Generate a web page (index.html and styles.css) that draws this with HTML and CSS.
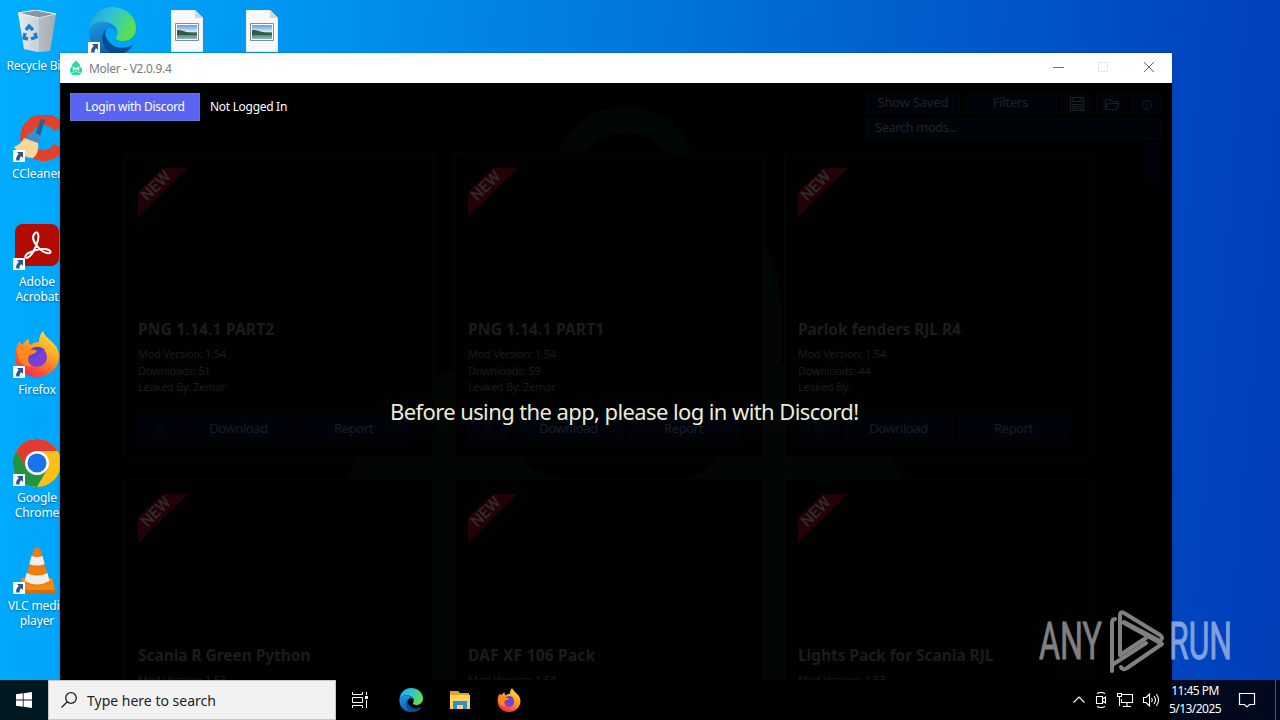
FILE: index.html
```
<!DOCTYPE html>
<html lang="en">
<head>
  <meta charset="UTF-8">
  <title>Moler - V2.0.9.4</title>
  <link rel="stylesheet" href="styles.css">
</head>
<body>
  <!-- shared symbols -->
  <svg class="defs" width="0" height="0">
    <defs>
      <linearGradient id="edgeGreen" x1="0" y1="0" x2="1" y2="0.4">
        <stop offset="0" stop-color="#1b9de2"/>
        <stop offset="0.5" stop-color="#2fc3d4"/>
        <stop offset="1" stop-color="#5be04f"/>
      </linearGradient>
      <linearGradient id="edgeBlue" x1="0" y1="0" x2="0.6" y2="1">
        <stop offset="0" stop-color="#1c9de6"/>
        <stop offset="1" stop-color="#0a54a8"/>
      </linearGradient>
      <linearGradient id="foxBody" x1="0.8" y1="0" x2="0.2" y2="1">
        <stop offset="0" stop-color="#ffe63b"/>
        <stop offset="0.45" stop-color="#ff9a22"/>
        <stop offset="0.75" stop-color="#ff5037"/>
        <stop offset="1" stop-color="#e8265f"/>
      </linearGradient>
      <linearGradient id="bin" x1="0" y1="0" x2="1" y2="0">
        <stop offset="0" stop-color="#e8eef2"/>
        <stop offset="0.6" stop-color="#c3ccd4"/>
        <stop offset="1" stop-color="#9aa7b3"/>
      </linearGradient>
      <linearGradient id="photo" x1="0" y1="0" x2="0" y2="1">
        <stop offset="0" stop-color="#5f9fe4"/>
        <stop offset="0.5" stop-color="#dcecf5"/>
        <stop offset="0.55" stop-color="#3d6c58"/>
        <stop offset="1" stop-color="#8fb8c8"/>
      </linearGradient>
    </defs>
    <symbol id="edge" viewBox="0 0 48 48">
      <path d="M1 22C2 9 12 0 24 0c14 0 24 10 24 21 0 8-6 13-13 13-5 0-8-2-7-4 3-4 2-10-4-13C16 13 6 14 1 22z" fill="url(#edgeGreen)"/>
      <path d="M1 22c5-8 15-9 22-5 3 2 5 5 5 8-1-3-4-5-7-4-6 3-6 12 0 18 6 5 15 5 23 0-4 6-12 9-20 9C10 48-1 36 1 22z" fill="url(#edgeBlue)"/>
      <path d="M18 22c-7 8-4 20 7 25 8 2 16-2 20-9-8 4-17 4-23-2-4-4-6-9-4-14z" fill="#0c4a94"/>
    </symbol>
    <symbol id="firefox" viewBox="0 0 46 46">
      <path d="M29 0c1 4 5 7 8 10 5 4 8 9 8 15 0 12-10 21-22 21S1 37 1 25c0-7 2-11 5-15 0 2 1 3 2 4 2-3 4-5 7-6-1 3 0 5 2 6 3-3 6-3 8-3 0-4 1-8 4-11z" fill="url(#foxBody)"/>
      <circle cx="23" cy="26" r="10" fill="#7a3fd6"/>
      <path d="M16 19c4-4 12-4 15 0-3 0-5 1-6 4-2 3-7 4-11 5-1-4 0-7 2-9z" fill="#5b3fd0"/>
      <path d="M3 18c5-4 9-3 12 0 3 1 6 0 8 2-1 3-5 3-7 4-3 3-2 8 1 11C8 36 3 29 3 18z" fill="#ff8a1c"/>
    </symbol>
    <symbol id="shortcut" viewBox="0 0 12 12">
      <path d="M0 0h12v12H0z" fill="#fff"/>
      <path d="M4 2h6v6L8.300 6.300C7 7.200 6.400 8.400 6.600 10.500H3.200C2.700 7.500 4 5.600 5.800 3.900z" fill="#2a5598"/>
    </symbol>
    <symbol id="image-file" viewBox="0 0 32 42">
      <path d="M0 0h24l8 8v34H0z" fill="#f8f8f8" stroke="#c9d5dd" stroke-width="0.600"/>
      <path d="M24 0v8h8z" fill="#cfd8de"/>
      <path d="M4.500 13.500h23v17h-23z" fill="#fff" stroke="#7d8d99"/>
      <path d="M6 15h20v14H6z" fill="url(#photo)"/>
      <path d="M6 20c6 0 10 3 20 4v1H6z" fill="#2e5b45"/>
    </symbol>
    <symbol id="mole" viewBox="0 0 12 16">
      <path d="M6 0l1.400 2.200C9.500 3 10.300 5 10.300 7L12 8.500v3.800L9.500 15h-7L0 12.300V8.500L1.700 7c0-2 .8-4 2.900-4.800z" fill="#2fd8a0"/>
      <path d="M3.500 10.500v-3L6 9.300l2.500-1.800v3" fill="none" stroke="#fff" stroke-width="1.300"/>
      <path d="M1 13l5-1.500 5 1.500" fill="none" stroke="#fff" stroke-width="0.500"/>
    </symbol>
  </svg>

  <div class="desktop">
    <div class="shortcut-item recycle">
      <svg class="app-icon" width="38" height="42" viewBox="0 0 38 42">
        <path d="M0 3l18-3 20 4-6 37-13 1-13-3z" fill="url(#bin)"/>
        <path d="M0 3l18-3 20 4-17 4z" fill="#8796a3" stroke="#f2f6f8"/>
        <path d="M21 8l17-4-6 37-11 1z" fill="#a9b0b6" opacity=".6"/>
        <g fill="none" stroke="#1c7ed0" stroke-width="3.400">
          <path d="M8 20l3-4 4 4"/><path d="M17 23l1 4-5 2"/><path d="M10 29l-4-1 1-5"/>
        </g>
      </svg>
      <span>Recycle Bin</span>
    </div>
    <div class="shortcut-item edge-item">
      <svg class="app-icon" width="48" height="48"><use href="#edge"/></svg>
      <svg class="arrow" width="12" height="12"><use href="#shortcut"/></svg>
    </div>
    <div class="shortcut-item file-one">
      <svg class="app-icon" width="32" height="42"><use href="#image-file"/></svg>
    </div>
    <div class="shortcut-item file-two">
      <svg class="app-icon" width="32" height="42"><use href="#image-file"/></svg>
    </div>
    <div class="shortcut-item ccleaner">
      <svg class="app-icon" width="46" height="46" viewBox="0 0 46 46">
        <path d="M45 13A18 18 0 1 0 45 32" fill="none" stroke="#e3402b" stroke-width="11"/>
        <path d="M27 4l4 1-5 16-5-2z" fill="#20639a"/>
        <path d="M15 18c5-2 10 0 12 5l-2 6-14-4z" fill="#3e8cc8"/>
        <path d="M10 23l14 5c1 7-1 12-5 15C11 43 5 39 0 32c5-2 8-5 10-9z" fill="#f6d79a"/>
      </svg>
      <svg class="arrow" width="12" height="12"><use href="#shortcut"/></svg>
      <span>CCleaner</span>
    </div>
    <div class="shortcut-item acrobat">
      <svg class="app-icon" width="46" height="46" viewBox="0 0 46 46">
        <rect x="1" y="1" width="44" height="42" rx="8" fill="#b30b00"/>
        <path d="M21 10c3-2 4 2 3 7-2 8-7 17-11 18-3 0-2-4 4-6 6-3 14-4 18-2 3 2 1 4-2 3-6-1-13-9-14-15 0-3 1-4 2-5z" fill="none" stroke="#fff" stroke-width="2"/>
      </svg>
      <svg class="arrow" width="12" height="12"><use href="#shortcut"/></svg>
      <span>Adobe<br>Acrobat</span>
    </div>
    <div class="shortcut-item firefox-item">
      <svg class="app-icon" width="46" height="46"><use href="#firefox"/></svg>
      <svg class="arrow" width="12" height="12"><use href="#shortcut"/></svg>
      <span>Firefox</span>
    </div>
    <div class="shortcut-item chrome">
      <svg class="app-icon" width="48" height="48" viewBox="0 0 48 48">
        <circle cx="24" cy="24" r="24" fill="#fbc116"/>
        <path d="M3.200 12A24 24 0 0 1 44.800 12H24L13.600 30z" fill="#e33b2e"/>
        <path d="M3.200 12A24 24 0 0 0 24 48l10.400-18L14 30z" fill="#229342"/>
        <circle cx="24" cy="24" r="12" fill="#fff"/>
        <circle cx="24" cy="24" r="9.500" fill="#1a73e8"/>
      </svg>
      <svg class="arrow" width="12" height="12"><use href="#shortcut"/></svg>
      <span>Google<br>Chrome</span>
    </div>
    <div class="shortcut-item vlc">
      <svg class="app-icon" width="40" height="46" viewBox="0 0 40 46">
        <path d="M5 31h30l4 15H1z" fill="#f58a12"/>
        <path d="M1 43h38v3H1z" fill="#d86c08"/>
        <path d="M17 2q3-3 6 0l10 34q-13 7-26 0z" fill="#f07c0c"/>
        <path d="M14.500 9q5.500 2 11 0l2.200 8q-7.700 3-15.400 0zM9.500 26q10.500 5 21 0l2 8q-12.500 7-25 0z" fill="#eee"/>
      </svg>
      <svg class="arrow" width="12" height="12"><use href="#shortcut"/></svg>
      <span>VLC media<br>player</span>
    </div>
  </div>

  <div class="window">
    <div class="titlebar">
      <svg width="14" height="16"><use href="#mole"/></svg>
      <span class="title">Moler - V2.0.9.4</span>
      <svg class="controls" width="120" height="30" viewBox="0 0 120 30" fill="none">
        <path d="M9 14.500h11" stroke="#777"/>
        <path d="M54.500 9.500h9v9h-9z" stroke="#e6e6e6"/>
        <path d="M100 9l10 10M110 9l-10 10" stroke="#666"/>
      </svg>
    </div>

    <div class="content">
      <svg class="logo-bg" width="600" height="597" viewBox="0 0 600 597" fill="#020605">
        <path d="M300 24c42 0 70 28 72 76 50 20 80 60 84 120v60c60 20 130 80 130 170 0 60-40 110-90 147H104c-50-37-90-87-90-147 0-90 70-150 130-170v-60c4-60 34-100 84-120 2-48 30-76 72-76z"/>
        <path d="M262 65q38-30 76 0v40h-76zM200 380q100 60 190 0v-40H200z" fill="#000"/>
      </svg>

      <div class="toolbar">
        <button class="login">Login with Discord</button>
        <span class="status">Not Logged In</span>
        <div class="tools">
          <div class="tool-row">
            <button class="tool wide">Show Saved</button>
            <button class="tool wide">Filters</button>
            <button class="tool">
              <svg width="16" height="16" viewBox="0 0 16 16" fill="none" stroke="#1d2022" stroke-width="1.200"><path d="M1.500 1.500h13v13h-13zM4 1.500v4h8v-4M4 14V8.500h8V14M5 10.500h6M5 12.500h6"/></svg>
            </button>
            <button class="tool">
              <svg width="16" height="16" viewBox="0 0 16 16" fill="none" stroke="#1b1f21" stroke-width="1.200"><path d="M1.500 13.500v-10h5l1 2h6v2M1.500 13.500l2.500-6h11l-2.500 6z"/></svg>
            </button>
            <button class="tool">
              <svg width="16" height="16" viewBox="0 0 16 16" fill="none" stroke="#1b1f21"><circle cx="8" cy="9" r="4.500"/><path d="M8 7v1M8 9v2.500"/></svg>
            </button>
          </div>
          <div class="search">Search mods...</div>
        </div>
      </div>

      <div class="mods">
        <div class="card">
          <div class="preview"><div class="ribbon"><span>NEW</span></div></div>
          <h3>PNG 1.14.1 PART2</h3>
          <p>Mod Version: 1.54</p>
          <p>Downloads: 51</p>
          <p>Leaked By: Zemar</p>
          <div class="actions"><button class="star">☆</button><button>Download</button><button>Report</button></div>
        </div>
        <div class="card">
          <div class="preview"><div class="ribbon"><span>NEW</span></div></div>
          <h3>PNG 1.14.1 PART1</h3>
          <p>Mod Version: 1.54</p>
          <p>Downloads: 59</p>
          <p>Leaked By: Zemar</p>
          <div class="actions"><button class="star">☆</button><button>Download</button><button>Report</button></div>
        </div>
        <div class="card">
          <div class="preview"><div class="ribbon"><span>NEW</span></div></div>
          <h3 class="long">Parlok fenders RJL R4</h3>
          <p>Mod Version: 1.54</p>
          <p>Downloads: 44</p>
          <p>Leaked By:</p>
          <div class="actions"><button class="star">☆</button><button>Download</button><button>Report</button></div>
        </div>
        <div class="card">
          <div class="preview"><div class="ribbon"><span>NEW</span></div></div>
          <h3 class="long">Scania R Green Python</h3>
          <p>Mod Version: 1.53</p>
        </div>
        <div class="card">
          <div class="preview"><div class="ribbon"><span>NEW</span></div></div>
          <h3>DAF XF 106 Pack</h3>
          <p>Mod Version: 1.54</p>
        </div>
        <div class="card">
          <div class="preview"><div class="ribbon"><span>NEW</span></div></div>
          <h3 class="long">Lights Pack for Scania RJL</h3>
          <p>Mod Version: 1.53</p>
        </div>
      </div>
      <div class="scroll-thumb"></div>
      <div class="notice">Before using the app, please log in with Discord!</div>
    </div>
  </div>

  <svg class="watermark" width="200" height="70" viewBox="0 0 200 70">
    <g fill="#fff" stroke="#fff" stroke-width="0.800" font-family="Roboto, sans-serif" font-size="52">
      <text x="3" y="54" textLength="63" lengthAdjust="spacingAndGlyphs">ANY</text>
      <text x="133" y="54" textLength="63" lengthAdjust="spacingAndGlyphs">RUN</text>
    </g>
    <g fill="none" stroke="#fff" stroke-width="4" stroke-linejoin="round" stroke-linecap="round">
      <path d="M84 50V10q0-4 4-2l36 22q4 3 0 6l-36-19"/>
      <path d="M79 14q-3 0-3 4v48M76 60l34-22"/>
      <path d="M88 18l38 21-35 24q-4 3-6-1M84 50l26-17"/>
    </g>
  </svg>

  <div class="taskbar">
    <div class="start">
      <svg width="16" height="16" viewBox="0 0 16 16" fill="#fff"><path d="M0 2.300l6.800-1v6.300H0zM7.600 1.200L16 0v7.600H7.600zM0 8.400h6.800v6.300L0 13.700zM7.600 8.400H16V16l-8.400-1.200z"/></svg>
    </div>
    <div class="taskbar-search">
      <svg width="18" height="18" viewBox="0 0 18 18" fill="none" stroke="#222" stroke-width="1.300"><circle cx="11" cy="7" r="5.300"/><path d="M7.300 10.800L1.500 16.500"/></svg>
      <span>Type here to search</span>
    </div>
    <div class="pinned">
      <svg width="18" height="16" viewBox="0 0 18 16" fill="none" stroke="#fff"><path d="M1.500 0v2.500h10V0M1.500 5.500h10v5h-10zM1.500 16v-2.500h10V16M15.500 0v3M15.500 8v8"/><path d="M14 4h3v3h-3z" fill="#fff" stroke="none"/></svg>
      <svg class="pinned-edge" width="24" height="24"><use href="#edge"/></svg>
      <svg width="22" height="20" viewBox="0 0 22 20"><path d="M1 1h8l2 2h9v5H1z" fill="#e0a126"/><path d="M1 5h20v14H1z" fill="#ffd45e"/><path d="M4 11h14v8h-4v-4H8v4H4z" fill="#2f8fd0"/></svg>
      <svg width="24" height="24"><use href="#firefox"/></svg>
    </div>
    <div class="tray">
      <svg width="14" height="16" viewBox="0 0 14 16" fill="none" stroke="#fff" stroke-width="1.200"><path d="M1.500 10.500L7 5l5.500 5.500"/></svg>
      <svg width="14" height="16" viewBox="0 0 14 16" fill="none" stroke="#fff" stroke-width="1.100"><path d="M2.500 4.500h6v7h-6zM8.500 7l3-2v6l-3-2M3 1.500Q7-.5 11 1.500M3 14.500q4 2 8 0"/></svg>
      <svg width="18" height="16" viewBox="0 0 18 16" fill="none" stroke="#fff" stroke-width="1.100"><path d="M6 2.500h10.500v8H5.500V7M11 10.500v4M7 14.500h8M1.500 1.500h4v3h-4zM3.500 4.500V14"/></svg>
      <svg width="18" height="16" viewBox="0 0 18 16" fill="none" stroke="#fff" stroke-width="1.100"><path d="M1.500 5.500h2.500l3.500-3.500v12L4 10.500H1.500zM9.500 6q1.500 2 0 4M12 4q3 4 0 8M14.300 2q4.500 6 0 12"/></svg>
      <div class="clock">11:45 PM<br>5/13/2025</div>
      <svg class="action-center" width="18" height="18" viewBox="0 0 18 18" fill="none" stroke="#fff" stroke-width="1.200"><path d="M1.500 2.500h15v11h-5l-2.500 2.500-2.500-2.500h-5z"/></svg>
    </div>
    <div class="show-desktop"></div>
  </div>
</body>
</html>
```
FILE: styles.css
```
* {
  box-sizing: border-box;
}
body {
  margin: 0;
  width: 1280px;
  height: 720px;
  overflow: hidden;
  position: relative;
  font-family: "Noto Sans", sans-serif;
  background: linear-gradient(95deg, #00aeff 0%, #009cf5 16%, #0086e6 35%, #0068d2 60%, #004ac4 85%, #003eb8 100%);
}
svg {
  display: block;
  flex: none;
}
button {
  font-family: inherit;
  padding: 0;
  border: none;
}
.defs {
  position: absolute;
}

/* desktop icons */
.shortcut-item {
  position: absolute;
  width: 76px;
  color: #fff;
  font-size: 12px;
  line-height: 15px;
  text-align: center;
  text-shadow: 0 1px 2px rgba(0,0,0,0.4);
  display: flex;
  flex-direction: column;
  align-items: center;
  white-space: nowrap;
}
.shortcut-item span {
  margin-top: 5px;
  letter-spacing: -0.1px;
}
.arrow {
  position: absolute;
  left: 14px;
  top: 35px;
}
.recycle { left: -1px; top: 10px; }
.recycle span { margin-top: 6px; letter-spacing: -0.2px; }
.edge-item { left: 74px; top: 7px; }
.file-one { left: 149px; top: 10px; }
.file-two { left: 224px; top: 10px; }
.ccleaner { left: -1px; top: 115px; }
.acrobat { left: -1px; top: 223px; }
.firefox-item { left: -1px; top: 331px; }
.chrome { left: -1px; top: 439px; }
.chrome span { margin-top: 3px; }
.vlc { left: -1px; top: 547px; }

/* application window */
.window {
  position: absolute;
  left: 60px;
  top: 53px;
  width: 1112px;
  height: 667px;
  background: #000;
  box-shadow: 0 0 2px rgba(0,0,0,0.3);
  overflow: hidden;
}
.titlebar {
  display: flex;
  align-items: center;
  height: 30px;
  padding: 0 8px 0 9px;
  background: #fff;
}
.title {
  margin-left: 6px;
  color: #7a7a7a;
  font-size: 12px;
  letter-spacing: -0.3px;
}
.controls {
  margin-left: auto;
}
.content {
  position: relative;
  padding: 10px;
}
.logo-bg {
  position: absolute;
  left: 265px;
  top: 0;
}
.toolbar {
  position: relative;
  display: flex;
  align-items: flex-start;
  height: 59px;
}
.login {
  width: 130px;
  height: 28px;
  padding-bottom: 1px;
  background: #5865f2;
  color: #fff;
  font-size: 12px;
  letter-spacing: -0.3px;
  border: 1px solid #6a74c8;
}
.status {
  margin-left: 10px;
  color: #fff;
  font-size: 12px;
  letter-spacing: -0.3px;
  line-height: 28px;
}
.tools {
  width: 296px;
  margin-left: auto;
}
.tool-row {
  display: flex;
  gap: 4px;
}
.tool {
  display: flex;
  align-items: center;
  justify-content: center;
  width: 31px;
  height: 21px;
  background: #00040a;
  border: 1px solid #02070b;
  color: #202325;
  font-size: 13px;
  letter-spacing: -0.2px;
  line-height: 16px;
}
.tool.wide {
  width: 94px;
  align-items: flex-start;
}
.search {
  height: 21px;
  margin-top: 5px;
  padding-left: 8px;
  background: #00040a;
  border: 1px solid #02070b;
  color: #202325;
  font-size: 13px;
  letter-spacing: -0.5px;
  line-height: 15px;
}

/* mod list */
.mods {
  position: relative;
  display: grid;
  grid-template-columns: repeat(3, 310px);
  gap: 20px;
  margin-left: 54px;
}
.card {
  height: 306px;
  padding: 15px 13px;
  background: #000101;
  border: 1px solid #050606;
  color: #1c1c1c;
}
.preview {
  height: 150px;
}
.ribbon {
  position: relative;
  width: 50px;
  height: 49px;
  background: #220207;
  clip-path: polygon(50% 0, 100% 0, 0 100%, 0 48%);
}
.ribbon span {
  position: absolute;
  left: -2px;
  top: 8px;
  width: 40px;
  color: #302a2a;
  font: 500 16px/20px Roboto, sans-serif;
  text-align: center;
  transform: rotate(-45deg);
}
.card h3 {
  margin: 0 0 5px;
  font-size: 15.500px;
  line-height: 23px;
  letter-spacing: 0.2px;
  white-space: nowrap;
}
.card h3.long {
  letter-spacing: -0.05px;
}
.card p {
  margin: 0;
  font-size: 11px;
  letter-spacing: -0.28px;
  line-height: 16.500px;
}
.actions {
  display: flex;
  gap: 4px;
  margin-top: 18px;
}
.actions button {
  width: 111px;
  height: 29px;
  background: #00040a;
  color: #1a1e24;
  font-size: 13px;
  letter-spacing: -0.4px;
}
.actions button.star {
  width: 41px;
  font-size: 15px;
  color: #0a1219;
}
.scroll-thumb {
  position: absolute;
  right: 12px;
  top: 59px;
  width: 14px;
  height: 42px;
  background: #00020b;
}
.notice {
  position: absolute;
  left: 330px;
  top: 313px;
  color: #ecebd8;
  font-size: 22px;
  letter-spacing: -0.6px;
  line-height: 30px;
  white-space: nowrap;
}
.watermark {
  position: absolute;
  left: 1036px;
  top: 605px;
  opacity: 0.5;
}

/* taskbar */
.taskbar {
  position: absolute;
  left: 0;
  bottom: 0;
  display: flex;
  align-items: center;
  width: 1280px;
  height: 40px;
  background: linear-gradient(90deg, #000 1171px, #00091e 1172px);
}
.start {
  display: flex;
  align-items: center;
  justify-content: center;
  width: 48px;
  height: 40px;
  background: #001820;
}
.taskbar-search {
  display: flex;
  align-items: center;
  width: 288px;
  height: 40px;
  padding-left: 11px;
  background: #f2f2f2;
  border: 1px solid #c8c8c8;
  color: #222;
  font-size: 14px;
}
.taskbar-search span {
  margin-left: 9px;
}
.pinned {
  display: flex;
  align-items: center;
  gap: 26px;
  margin-left: 15px;
}
.pinned-edge {
  margin-left: 4px;
}
.tray {
  display: flex;
  align-items: center;
  gap: 8px;
  height: 40px;
  margin-left: auto;
  padding-right: 19px;
  color: #fff;
}
.clock {
  width: 60px;
  margin-left: -3px;
  font-size: 12px;
  letter-spacing: -0.55px;
  line-height: 18px;
  text-align: center;
  white-space: nowrap;
}
.action-center {
  margin-left: 5px;
}
.show-desktop {
  width: 5px;
  height: 40px;
  border-left: 1px solid #4a5266;
}
```
